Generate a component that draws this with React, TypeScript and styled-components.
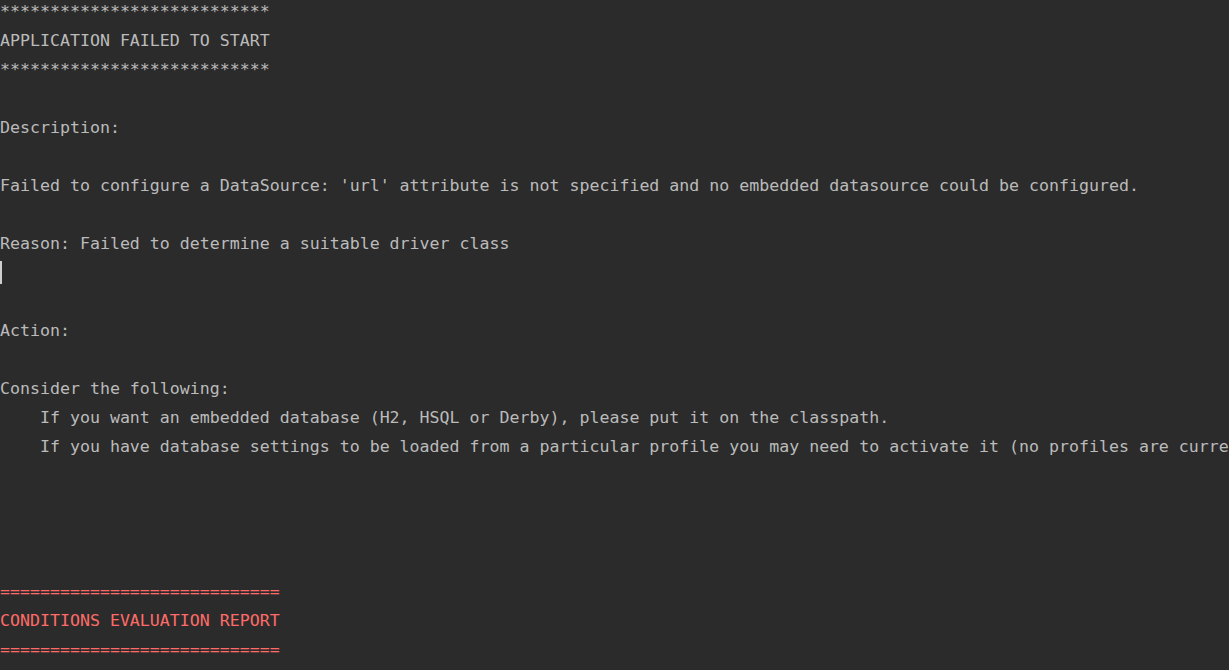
import React from "react";
import styled, { createGlobalStyle } from "styled-components";

const Global = createGlobalStyle`
  html, body {
    margin: 0;
    padding: 0;
    background: #2b2b2b;
    overflow: hidden;
  }
`;

const Console = styled.div`
  width: 1229px;
  height: 670px;
  overflow: hidden;
  background: #2b2b2b;
  font-family: "DejaVu Sans Mono", "Liberation Mono", monospace;
  font-size: 16.6px;
  line-height: 29px;
  color: #bbbbbb;
  box-sizing: border-box;
  margin-top: -3.5px;
`;

const Line = styled.div<{ $error?: boolean }>`
  white-space: pre;
  height: 29px;
  color: ${(p) => (p.$error ? "#ff6b68" : "#bbbbbb")};
`;

const Caret = styled.span`
  display: inline-block;
  width: 2px;
  height: 23px;
  background: #cfcfcf;
  vertical-align: middle;
  position: relative;
  top: -1px;
`;

const lines: { text: string; error?: boolean; caret?: boolean }[] = [
  { text: "***************************" },
  { text: "APPLICATION FAILED TO START" },
  { text: "***************************" },
  { text: "" },
  { text: "Description:" },
  { text: "" },
  {
    text:
      "Failed to configure a DataSource: 'url' attribute is not specified and no embedded datasource could be configured.",
  },
  { text: "" },
  { text: "Reason: Failed to determine a suitable driver class" },
  { text: "", caret: true },
  { text: "" },
  { text: "Action:" },
  { text: "" },
  { text: "Consider the following:" },
  {
    text:
      "    If you want an embedded database (H2, HSQL or Derby), please put it on the classpath.",
  },
  {
    text:
      "    If you have database settings to be loaded from a particular profile you may need to activate it (no profiles are currently active).",
  },
  { text: "" },
  { text: "" },
  { text: "" },
  { text: "" },
  { text: "============================", error: true },
  { text: "CONDITIONS EVALUATION REPORT", error: true },
  { text: "============================", error: true },
];

export default function App() {
  return (
    <>
      <Global />
      <Console>
        {lines.map((l, i) => (
          <Line key={i} $error={l.error}>
            {l.caret ? <Caret /> : l.text || " "}
          </Line>
        ))}
      </Console>
    </>
  );
}
